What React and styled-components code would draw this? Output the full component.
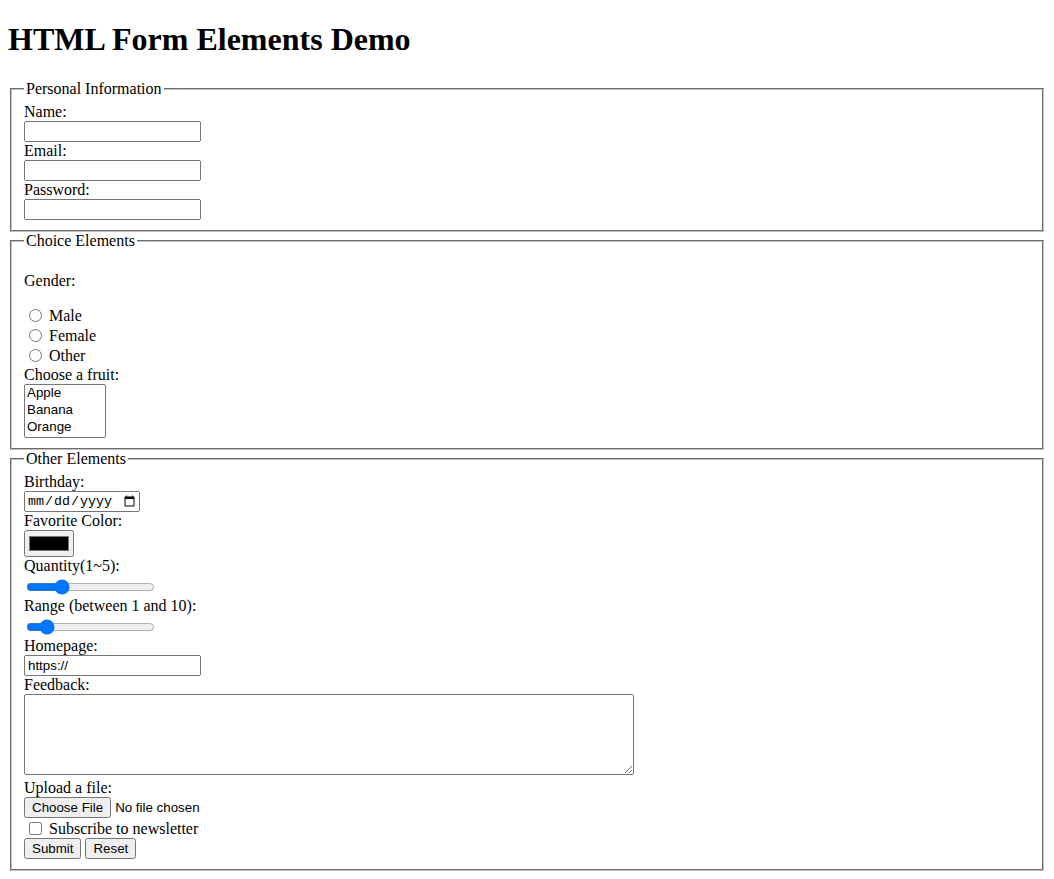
import React from "react";
import styled, { createGlobalStyle } from "styled-components";

const GlobalStyle = createGlobalStyle`
  body {
    margin: 8px;
    background: #fff;
    color: #000;
    font-family: "Liberation Serif", "Times New Roman", serif;
    font-size: 16px;
  }
`;

// body margin and heading margin collapse in the original, so the top is trimmed here
const Title = styled.h1`
  font-size: 32px;
  font-weight: bold;
  margin: 13.44px 0 21.44px;
  line-height: 36.8px;
`;

const Fieldset = styled.fieldset`
  margin: 0 2px;
  padding: 5.6px 12px 10px;
  border: 2px groove #c0c0c0;
  min-width: 0;
`;

const Legend = styled.legend`
  padding: 0 2px;
  line-height: 18px;
`;

const Stack = styled.div`
  display: flex;
  flex-direction: column;
  align-items: flex-start;
`;

const FieldLabel = styled.label`
  display: block;
  line-height: 18px;
`;

const Paragraph = styled.p`
  margin: 16px 0;
  line-height: 18px;
`;

const controlFont = `
  font-family: "Liberation Sans", Arial, sans-serif;
  font-size: 13.333px;
`;

const TextInput = styled.input`
  ${controlFont}
  box-sizing: border-box;
  width: 177px;
  height: 21px;
  margin: 0;
  padding: 1px 2px;
`;

const ChoiceRow = styled.label`
  display: flex;
  align-items: center;
  height: ${(p) => p.$h || 20}px;
  line-height: 18px;
`;

const Tick = styled.input`
  width: 13px;
  height: 13px;
  margin: 0 7px 0 5px;
`;

const FruitList = styled.select`
  ${controlFont}
  box-sizing: border-box;
  width: 82px;
  height: 54px;
  margin: 0;
  overflow: hidden;
  option {
    padding: 0 2px 1px;
    line-height: 16px;
  }
`;

const DateInput = styled.input`
  font-family: "Liberation Mono", monospace;
  font-size: 13.333px;
  box-sizing: border-box;
  width: 116px;
  height: 21px;
  margin: 0;
`;

const ColorInput = styled.input`
  box-sizing: border-box;
  width: 50px;
  height: 27px;
  margin: 0;
`;

const RangeRow = styled.div`
  display: flex;
  align-items: center;
  height: 22px;
`;

const RangeInput = styled.input`
  width: 129px;
  height: 16px;
  margin: 2px 2px 0;
`;

const TextArea = styled.textarea`
  font-family: "Liberation Mono", monospace;
  font-size: 13.333px;
  box-sizing: border-box;
  width: 610px;
  height: 81px;
  margin: 0 0 4px;
`;

const FileInput = styled.input`
  ${controlFont}
  height: 22px;
  margin: 0;
`;

const ButtonRow = styled.div`
  display: flex;
  gap: 4px;
`;

const Button = styled.button`
  ${controlFont}
  box-sizing: border-box;
  height: 21px;
  margin: 0;
  padding: 1px 6px;
`;

const fruits = ["Apple", "Banana", "Orange"];
const genders = ["Male", "Female", "Other"];

export default function App() {
  return (
    <>
      <GlobalStyle />
      <Title>HTML Form Elements Demo</Title>
      <form onSubmit={(e) => e.preventDefault()}>
        <Fieldset>
          <Legend>Personal Information</Legend>
          <Stack>
            <FieldLabel htmlFor="name">Name:</FieldLabel>
            <TextInput id="name" type="text" />
            <FieldLabel htmlFor="email">Email:</FieldLabel>
            <TextInput id="email" type="email" />
            <FieldLabel htmlFor="password">Password:</FieldLabel>
            <TextInput id="password" type="password" />
          </Stack>
        </Fieldset>

        <Fieldset>
          <Legend>Choice Elements</Legend>
          <Stack>
            <Paragraph>Gender:</Paragraph>
            {genders.map((g) => (
              <ChoiceRow key={g}>
                <Tick type="radio" name="gender" value={g.toLowerCase()} />
                {g}
              </ChoiceRow>
            ))}
            <FieldLabel htmlFor="fruit">Choose a fruit:</FieldLabel>
            <FruitList id="fruit" size={3}>
              {fruits.map((f) => (
                <option key={f} value={f.toLowerCase()}>
                  {f}
                </option>
              ))}
            </FruitList>
          </Stack>
        </Fieldset>

        <Fieldset>
          <Legend>Other Elements</Legend>
          <Stack>
            <FieldLabel htmlFor="birthday">Birthday:</FieldLabel>
            <DateInput id="birthday" type="date" />
            <FieldLabel htmlFor="color">Favorite Color:</FieldLabel>
            <ColorInput id="color" type="color" defaultValue="#000000" />
            <FieldLabel htmlFor="quantity">Quantity(1~5):</FieldLabel>
            <RangeRow>
              <RangeInput id="quantity" type="range" min={1} max={5} defaultValue={2} />
            </RangeRow>
            <FieldLabel htmlFor="range">Range (between 1 and 10):</FieldLabel>
            <RangeRow>
              <RangeInput id="range" type="range" min={1} max={10} defaultValue={2} />
            </RangeRow>
            <FieldLabel htmlFor="homepage">Homepage:</FieldLabel>
            <TextInput id="homepage" type="url" defaultValue="https://" />
            <FieldLabel htmlFor="feedback">Feedback:</FieldLabel>
            <TextArea id="feedback" />
            <FieldLabel htmlFor="upload">Upload a file:</FieldLabel>
            <FileInput id="upload" type="file" />
            <ChoiceRow $h={19}>
              <Tick type="checkbox" />
              Subscribe to newsletter
            </ChoiceRow>
            <ButtonRow>
              <Button type="submit">Submit</Button>
              <Button type="reset">Reset</Button>
            </ButtonRow>
          </Stack>
        </Fieldset>
      </form>
    </>
  );
}
